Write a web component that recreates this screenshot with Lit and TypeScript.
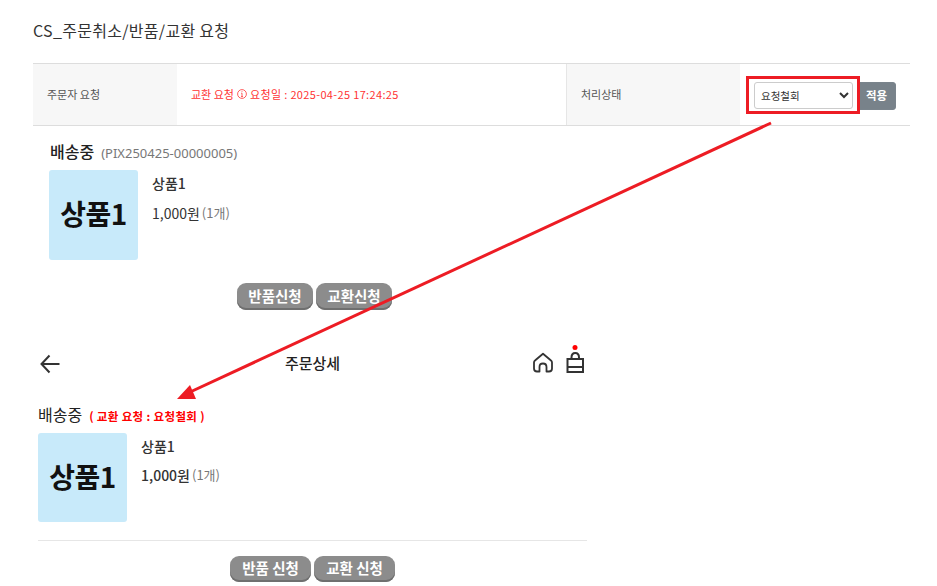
import { LitElement, html, css, svg } from "lit";
import { customElement } from "lit/decorators.js";

@customElement("app-root")
export class AppRoot extends LitElement {
  static styles = css`
    :host {
      display: block;
      position: relative;
      width: 937px;
      height: 586px;
      overflow: hidden;
      background: #fff;
      color: #333;
      font-family: "Noto Sans CJK KR", "Noto Sans", sans-serif;
      font-size: 13px;
    }
    * { box-sizing: border-box; }
    .page { padding: 20px 27px 0 33px; }
    h1 { margin: 0 0 22px; font-size: 16px; font-weight: 400; line-height: 21px; color: #333; letter-spacing: 0.3px; }
    .table {
      display: grid;
      grid-template-columns: 144px 389px 174px 170px;
      height: 63px;
      border-top: 1px solid #ddd;
      border-bottom: 1px solid #ddd;
      font-size: 11px;
    }
    .table > div { display: flex; align-items: center; }
    .label { background: #f7f7f7; padding: 0 0 2px 14px; color: #555; }
    .label.second { border-left: 1px solid #e6e6e6; }
    .value { padding: 0 0 2px 14px; color: #f33; gap: 3px; }
    .value .date { letter-spacing: 0.35px; }
    .info { flex: none; }
    .apply-cell { padding: 2px 0 0 14px; gap: 4px; }
    select {
      width: 99px; height: 27px; padding: 0 2px;
      border: 1px solid #ccc; border-radius: 3px;
      background: #fff; color: #333;
      font: 10.5px "Noto Sans CJK KR", sans-serif;
    }
    .apply {
      width: 39px; height: 28px; padding: 0 0 2px; margin: 0;
      border: 1px solid #7a848c; border-radius: 3px;
      background: #78828a; color: #fff;
      font: 700 11.5px "Noto Sans CJK KR", sans-serif;
    }
    .order-a { padding: 15px 0 0 16px; }
    .status { display: flex; align-items: baseline; gap: 7px; height: 21px; line-height: 21px; }
    .order-a .status { margin-left: 1px; }
    .status b { font-size: 16px; font-weight: 500; color: #222; }
    .status span { font-size: 13px; color: #777; font-family: "Noto Sans", sans-serif; }
    .product { display: flex; gap: 14px; }
    .order-a .product { margin-top: 8px; }
    .thumb {
      flex: none; width: 89px; height: 90px; padding-bottom: 4px; border-radius: 3px;
      background: #c8eafa; color: #111;
      display: flex; align-items: center; justify-content: center;
      font-size: 28px; font-weight: 700; letter-spacing: -0.5px;
    }
    .name { margin-top: 4px; height: 18px; line-height: 18px; font-size: 14px; font-weight: 500; color: #333; }
    .price { margin-top: 11px; height: 20px; line-height: 20px; font-size: 14px; color: #333; display: flex; gap: 2px; }
    .price.strong { font-weight: 500; margin-top: 10px; }
    .price em { font-style: normal; font-weight: 400; font-size: 13px; color: #777; }
    .btns { display: flex; gap: 3px; }
    .btns button {
      height: 27px; padding: 0 0 3px; border: 0; border-radius: 9px;
      background: #8c8c8c; box-shadow: inset 0 -2px 0 #6f6f6f;
      color: #fff; font: 700 14.5px "Noto Sans CJK KR", sans-serif;
    }
    .btns-a { margin: 23px 0 0 188px; }
    .btns-a button { width: 76px; }
    .mobile { width: 549px; margin-top: 39px; margin-left: 5px; }
    .bar { display: grid; grid-template-columns: 1fr auto 1fr; grid-template-rows: 30px; align-items: center; height: 30px; padding-left: 2px; }
    .bar svg { display: block; flex: none; }
    .bar h2 { margin: 0; padding: 0 2px 3px 0; text-align: center; font-size: 15px; font-weight: 500; color: #222; }
    .bar .icons { display: flex; justify-content: flex-end; align-items: center; gap: 13px; padding-right: 2px; height: 30px; }
    .mobile .status { margin-top: 25px; gap: 7px; }
    .mobile .status b { font-weight: 400; font-size: 16px; }
    .mobile .status strong { font-size: 11.5px; font-weight: 700; color: #f00; letter-spacing: 0.35px; }
    .mobile .product { margin-top: 8px; }
    .mobile .thumb { height: 89px; }
    hr { margin: 18px 0 15px; border: 0; border-top: 1px solid #e6e6e6; height: 0; }
    .btns-b { margin-left: 192px; }
    .btns-b button { width: 81px; height: 26px; }
    .overlay { position: absolute; left: 0; top: 0; pointer-events: none; }
  `;

  private thumb() {
    return html`<div class="thumb">상품1</div>`;
  }

  render() {
    return html`
      <div class="page">
        <h1>CS_주문취소/반품/교환 요청</h1>
        <div class="table">
          <div class="label">주문자 요청</div>
          <div class="value">
            <span>교환 요청</span>
            <svg class="info" width="10" height="10" viewBox="0 0 10 10" fill="none" stroke="#f33" stroke-width="0.8">
              <circle cx="5" cy="5" r="4.4"></circle>
              <path d="M5 4.2V7.6M4.2 4.2H5M4 7.6H6M5 2.3V3.1"></path>
            </svg>
            <span class="date">요청일 : 2025-04-25 17:24:25</span>
          </div>
          <div class="label second">처리상태</div>
          <div class="apply-cell">
            <select><option>요청철회</option></select>
            <button class="apply">적용</button>
          </div>
        </div>

        <section class="order-a">
          <div class="status"><b>배송중</b><span>(PIX250425-00000005)</span></div>
          <div class="product">
            ${this.thumb()}
            <div>
              <div class="name">상품1</div>
              <div class="price">1,000원<em>(1개)</em></div>
            </div>
          </div>
          <div class="btns btns-a"><button>반품신청</button><button>교환신청</button></div>
        </section>

        <section class="mobile">
          <div class="bar">
            <svg width="20" height="20" viewBox="0 0 20 20" fill="none" stroke="#333" stroke-width="2">
              <path d="M19.5 10H1.5M9.5 1.5L1.5 10L9.5 18.5"></path>
            </svg>
            <h2>주문상세</h2>
            <div class="icons">
              <svg width="20" height="24" viewBox="0 0 20 24" fill="none" stroke="#333" stroke-width="1.8" stroke-linejoin="round" stroke-linecap="round">
                <path d="M6.500 19.500H4Q1 19.500 1 16.500V10.500Q1 9.300 2 8.500L10 1.800L18 8.500Q19 9.300 19 10.500V16.500Q19 19.500 16 19.500H13.500V15Q13.500 11.500 10 11.500Q6.500 11.500 6.500 15Z"></path>
              </svg>
              <svg width="19" height="38" viewBox="0 0 19 38" fill="none" stroke="#333" stroke-width="2">
                <circle cx="9" cy="2.500" r="2.500" fill="#f00" stroke="none"></circle>
                <path d="M1.500 14H17V27H1.500ZM1.500 22H17M5.500 14V12.500Q5.500 8 9.250 8Q13 8 13 12.500V14"></path>
              </svg>
            </div>
          </div>
          <div class="status"><b>배송중</b><strong>( 교환 요청 : 요청철회 )</strong></div>
          <div class="product">
            ${this.thumb()}
            <div>
              <div class="name">상품1</div>
              <div class="price strong">1,000원<em>(1개)</em></div>
            </div>
          </div>
          <hr />
          <div class="btns btns-b"><button>반품 신청</button><button>교환 신청</button></div>
        </section>
      </div>

      <svg class="overlay" width="937" height="586" viewBox="0 0 937 586" fill="none">
        ${svg`<rect x="747.5" y="77.500" width="111" height="35" stroke="#ed1c24" stroke-width="3"></rect>
        <path d="M771 123L188 393" stroke="#ed1c24" stroke-width="3"></path>
        <path d="M177 399L190 385L196 399Z" fill="#ed1c24"></path>`}
      </svg>
    `;
  }
}
